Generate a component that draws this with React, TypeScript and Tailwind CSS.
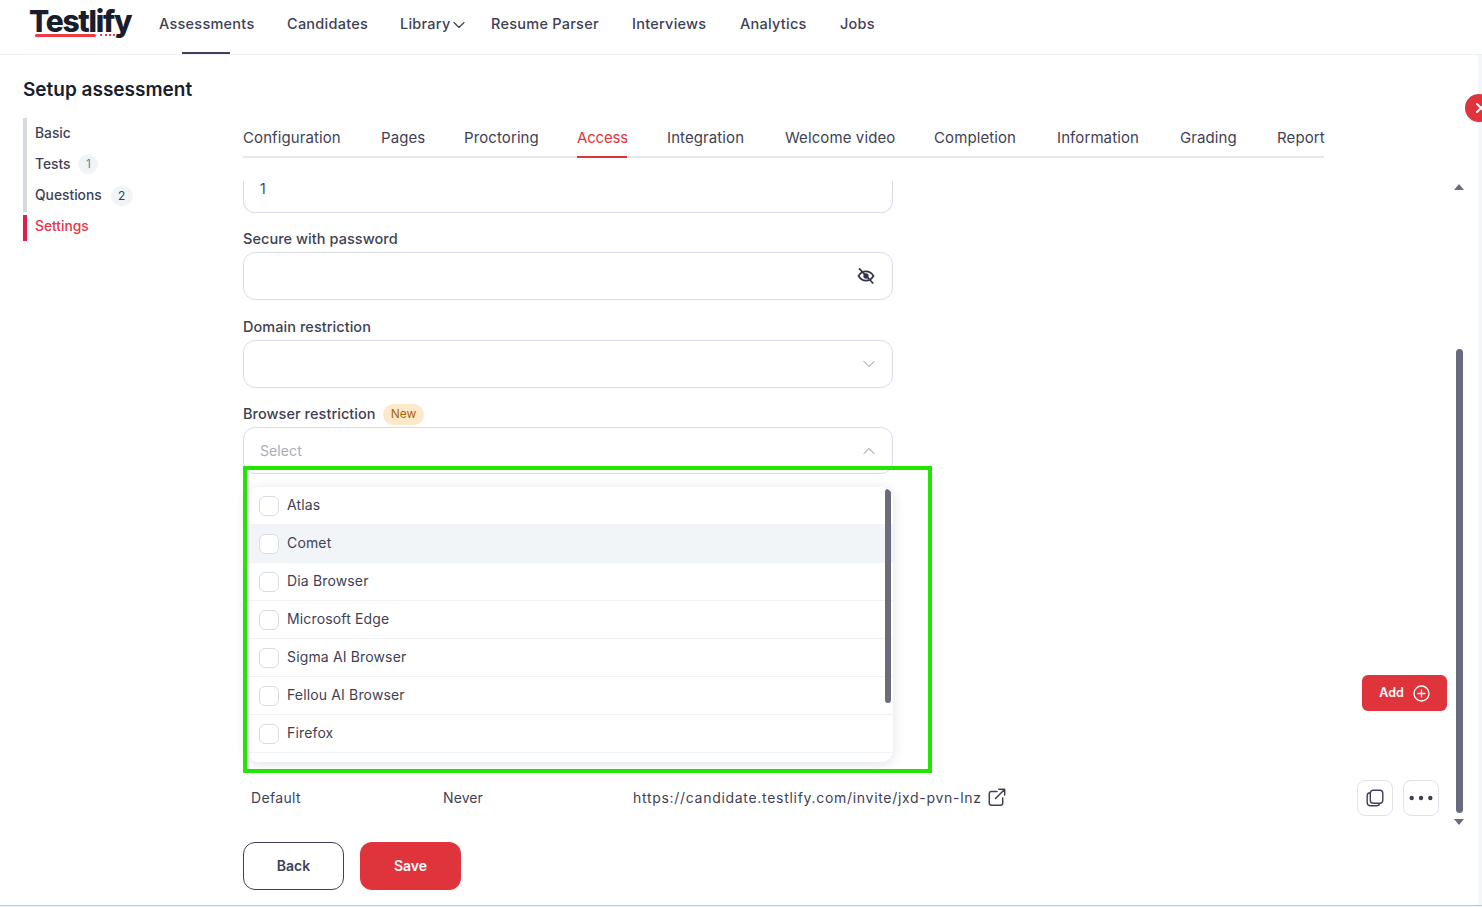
import { ChevronDown, ChevronUp } from 'lucide-react';

const navItems = [
  { name: 'Assessments', cls: 'w-[128px]' },
  { name: 'Candidates', cls: 'w-[113px]' },
  { name: 'Library', cls: 'w-[91px]' },
  { name: 'Resume Parser', cls: 'w-[141px]' },
  { name: 'Interviews', cls: 'w-[108px]' },
  { name: 'Analytics', cls: 'w-[100px]' },
  { name: 'Jobs', cls: 'w-[34px]' },
];
const tabs = [
  { name: 'Configuration', cls: 'w-[138px]' },
  { name: 'Pages', cls: 'w-[83px]' },
  { name: 'Proctoring', cls: 'w-[113px]' },
  { name: 'Access', cls: 'w-[90px]' },
  { name: 'Integration', cls: 'w-[118px]' },
  { name: 'Welcome video', cls: 'w-[149px]' },
  { name: 'Completion', cls: 'w-[123px]' },
  { name: 'Information', cls: 'w-[123px]' },
  { name: 'Grading', cls: 'w-[97px]' },
  { name: 'Report', cls: 'w-[47px]' },
];
const browsers = ['Atlas', 'Comet', 'Dia Browser', 'Microsoft Edge', 'Sigma AI Browser', 'Fellou AI Browser', 'Firefox'];

function EyeSlash() {
  return (
    <svg width="18" height="18" viewBox="0 0 18 18" fill="none" stroke="#33334a" strokeWidth="1.700" strokeLinecap="round">
      <path d="M1.500 9C3.400 5.900 6 4.400 9 4.400s5.600 1.500 7.500 4.600C14.600 12.100 12 13.600 9 13.600S3.400 12.100 1.500 9Z" />
      <circle cx="9" cy="9" r="1.800" fill="#33334a" />
      <path d="M2.500 1.800 15.800 16" />
    </svg>
  );
}

function CopyIcon() {
  return (
    <svg width="18" height="18" viewBox="0 0 18 18" fill="none" stroke="#3f3f55" strokeWidth="1.400">
      <rect x="1.200" y="3.800" width="12.500" height="13" rx="3" />
      <rect x="4.300" y="1.200" width="12.500" height="13" rx="3" fill="#fff" />
    </svg>
  );
}

function OpenIcon() {
  return (
    <svg width="18" height="18" viewBox="0 0 18 18" fill="none" stroke="#3f3f55" strokeWidth="1.500" strokeLinecap="round" strokeLinejoin="round">
      <path d="M9 3.500H3.300A2 2 0 0 0 1.300 5.500v9.700a2 2 0 0 0 2 2h9.400a2 2 0 0 0 2-2V10" />
      <path d="M7.500 10.500 16.500 1.500M10.800 1.200h5.900v5.900" />
    </svg>
  );
}

function Field({ label, children }: { label: React.ReactNode; children: React.ReactNode }) {
  return (
    <div className="flex flex-col">
      <div className="h-[26px] flex items-center text-[14.500px] font-medium tracking-[0.050px] text-[#3f3f55]">{label}</div>
      {children}
    </div>
  );
}

export default function App() {
  return (
    <div className="relative h-[907px] w-full overflow-hidden bg-white font-['Inter',sans-serif] text-[#3f3f55]">
      <header className="h-[55px] border-b border-[#eef0f3] flex items-center">
        <div className="relative ml-[30px] w-[129px] h-[54px] shrink-0">
          <span className="absolute -left-[1px] top-[2px] text-[30px] leading-[38px] font-extrabold tracking-[-1.300px] text-[#1a1d2b]">Testlify</span>
          <span className="absolute left-[5px] top-[34px] w-[61px] h-[3px] rounded-sm bg-[#ee3b44]" />
          <span className="absolute left-[70px] top-[34px] w-[15px] h-[2px] border-b-2 border-dotted border-[#ee3b44]" />
        </div>
        <nav className="flex items-center text-[14.500px] font-medium tracking-[0.250px] whitespace-nowrap">
          {navItems.map((n) => (
            <span key={n.name} className={`${n.cls} relative flex h-[54px] items-center pb-[7px]`}>
              {n.name}
              {n.name === 'Library' && <ChevronDown size={20} strokeWidth={1.400} className="-ml-[2px] mt-[2px] shrink-0" />}
              {n.name === 'Assessments' && <span className="absolute left-[23px] bottom-0 w-[48px] h-[2px] bg-[#3f3f55]" />}
            </span>
          ))}
        </nav>
      </header>

      <div className="flex h-[852px]">
        <div className="w-[1478px] shrink-0 flex flex-col">
          <h1 className="ml-[23px] mt-[23px] h-[24px] text-[19px] leading-[24px] font-semibold text-[#1a1d2b]">Setup assessment</h1>
          <div className="flex mt-[16px] flex-1 min-h-0">
            <aside className="ml-[23px] w-[220px] shrink-0 text-[13.800px] font-medium">
              <div className="border-l-4 border-[#d5d9e0] pl-[8px] h-[94px] flex flex-col">
                <div className="h-[31px] pb-[1px] flex items-center">Basic</div>
                <div className="h-[30px] flex items-center gap-2">
                  Tests
                  <span className="w-[20px] h-[20px] rounded-full bg-[#f1f4f7] text-[12px] font-normal text-[#6b84a0] flex items-center justify-center">1</span>
                </div>
                <div className="h-[33px] flex items-center gap-[9px]">
                  Questions
                  <span className="w-[22px] h-[20px] rounded-full bg-[#f1f4f7] text-[12px] font-normal flex items-center justify-center">2</span>
                </div>
              </div>
              <div className="mt-[3px] border-l-4 border-[#e11d48] pl-[8px] pb-[3px] h-[26px] flex items-center text-[#e8344a]">Settings</div>
            </aside>

            <main className="flex-1 min-w-0 flex flex-col">
              <div className="w-[1081px] h-[33px] mt-[7px] flex border-b-2 border-[#e5e8ec] text-[15px] tracking-[0.100px] whitespace-nowrap">
                {tabs.map((t) => (
                  <div key={t.name} className={t.cls}>
                    <span
                      className={t.name === 'Access' ? 'block w-[50px] h-[33px] pt-[2px] leading-[22px] border-b-2 border-[#e0343c] text-[#e0343c] tracking-[-0.200px]' : 'block h-[33px] pt-[2px] leading-[22px]'}
                    >
                      {t.name}
                    </span>
                  </div>
                ))}
              </div>

              <div className="flex mt-[23px] h-[649px]">
                <div className="w-[1204px] shrink-0 flex flex-col">
                  <div className="w-[650px]">
                    <div className="h-[32px] rounded-b-xl border border-t-0 border-[#d9dce6] pl-[16px] text-[14px] leading-[16px]">1</div>
                    <div className="mt-[13px]">
                      <Field label="Secure with password">
                        <div className="h-[48px] rounded-xl border border-[#d9dce6] flex items-center justify-end pr-[17px]">
                          <EyeSlash />
                        </div>
                      </Field>
                    </div>
                    <div className="mt-[14px]">
                      <Field label="Domain restriction">
                        <div className="h-[48px] rounded-xl border border-[#d9dce6] flex items-center justify-end pr-[13px]">
                          <ChevronDown size={20} strokeWidth={1} color="#6b7280" />
                        </div>
                      </Field>
                    </div>
                    <div className="mt-[13px]">
                      <Field
                        label={
                          <span className="flex items-center gap-[7px]">
                            Browser restriction
                            <span className="h-[21px] px-[8px] rounded-full bg-[#fde8c9] text-[12px] font-normal text-[#a8660a] flex items-center">New</span>
                          </span>
                        }
                      >
                        <div className="h-[47px] rounded-xl border border-[#d9dce6] flex items-center justify-between pl-[16px] pr-[13px] text-[14px] tracking-[0.100px] text-[#a9adb8]">
                          Select
                          <ChevronUp size={20} strokeWidth={1} color="#6b7280" />
                        </div>
                      </Field>
                    </div>
                  </div>

                  <div className="mt-[201px] flex justify-end">
                    <button className="h-[36px] w-[85px] rounded-md bg-[#e0343c] text-white text-[12.500px] font-semibold flex items-center justify-center gap-[9px]">
                      Add
                      <svg width="17" height="17" viewBox="0 0 17 17" fill="none" stroke="#fff" strokeWidth="1.300" strokeLinecap="round">
                        <circle cx="8.500" cy="8.500" r="7.500" />
                        <path d="M8.500 5v7M5 8.500h7" />
                      </svg>
                    </button>
                  </div>

                  <div className="mt-[69px] h-[36px] flex items-center pr-[8px]">
                    <span className="ml-[8px] w-[192px] text-[14px] tracking-[0.350px] -mt-[1px]">Default</span>
                    <span className="w-[190px] text-[14px] tracking-[0.100px] -mt-[1px]">Never</span>
                    <span className="text-[14px] tracking-[0.700px] -mt-[2px]">https://candidate.testlify.com/invite/jxd-pvn-lnz</span>
                    <span className="ml-[6px] -mt-[2px]"><OpenIcon /></span>
                    <button className="ml-auto w-[36px] h-[36px] rounded-lg border border-[#dfe2e9] flex items-center justify-center"><CopyIcon /></button>
                    <button className="ml-[10px] w-[36px] h-[36px] rounded-lg border border-[#dfe2e9] flex items-center justify-center">
                      <svg width="24" height="6" viewBox="0 0 24 6" fill="#3f3f55">
                        <circle cx="2.700" cy="3" r="2.200" />
                        <circle cx="12" cy="3" r="2.200" />
                        <circle cx="21.300" cy="3" r="2.200" />
                      </svg>
                    </button>
                  </div>
                </div>

                <div className="ml-[8px] w-[8px] flex flex-col items-center">
                  <span className="mt-[3px] w-0 h-0 border-x-[5px] border-x-transparent border-b-[6px] border-b-[#6b6b80]" />
                  <span className="mt-[159px] w-[7px] h-[464px] rounded-full bg-[#6b6b80]" />
                  <span className="mt-[6px] w-0 h-0 border-x-[5px] border-x-transparent border-t-[6px] border-t-[#6b6b80]" />
                </div>
              </div>

              <div className="mt-[12px] flex gap-4">
                <button className="w-[101px] h-[48px] rounded-xl border border-[#3f3f55] bg-white pb-[1px] text-[14px] font-semibold">Back</button>
                <button className="w-[101px] h-[48px] rounded-xl bg-[#e0343c] text-white pb-[1px] text-[14px] font-semibold">Save</button>
              </div>
            </main>
          </div>
        </div>
        <div className="w-[4px] bg-[#f3f6fb]" />
      </div>

      <div className="absolute left-0 right-0 bottom-0 h-[2px] border-t border-[#b9c8d2] bg-[#eef5f8]" />

      <div className="absolute left-[1465px] top-[94px] w-[28px] h-[28px] rounded-full bg-[#e0343c] flex items-center pl-[10px]">
        <svg width="12" height="12" viewBox="0 0 12 12" stroke="#fff" strokeWidth="2" strokeLinecap="round">
          <path d="M2 2l8 8M10 2l-8 8" />
        </svg>
      </div>

      <div className="absolute left-[247px] top-[487px] w-[646px] h-[275px] rounded-xl bg-white shadow-[0_2px_12px_rgba(30,40,70,0.14)] overflow-hidden">
        {browsers.map((b) => (
          <div key={b} className={b === 'Comet' ? 'h-[38px] bg-[#f1f5f8] flex items-center gap-2 pl-[12px] text-[14px] tracking-[0.150px]' : 'h-[38px] border-b border-[#f0f2f6] flex items-center gap-2 pl-[12px] text-[14px] tracking-[0.150px]'}>
            <span className="w-[20px] h-[20px] rounded-md border border-[#d9dce6] bg-white" />
            <span className={b === 'Comet' ? '-mt-[3px]' : '-mt-[2px]'}>{b}</span>
          </div>
        ))}
        <span className="absolute left-[638px] top-[2px] w-[6px] h-[214px] rounded-full bg-[#6b6b80]" />
      </div>

      <div className="absolute left-[243px] top-[466px] w-[689px] h-[307px] border-4 border-[#21e600] pointer-events-none" />
    </div>
  );
}
